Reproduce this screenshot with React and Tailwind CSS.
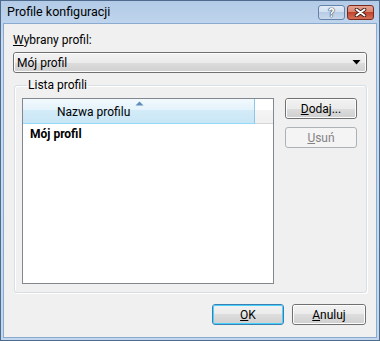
import React from 'react';

const font = { fontFamily: 'Roboto, "Noto Sans", sans-serif' };

function WinButton({ children, disabled, primary, className = '' }) {
  if (disabled) {
    return (
      <div className={`h-[21px] rounded-[3px] border border-[#adb2b5] bg-[#f4f4f4] flex items-center justify-center text-[#838383] ${className}`}>
        {children}
      </div>
    );
  }
  return (
    <div
      className={`h-[21px] rounded-[3px] border ${primary ? 'border-[#3c7fb1]' : 'border-[#707070]'} flex items-center justify-center text-black bg-[linear-gradient(#f2f2f2_0%,#ebebeb_50%,#dddddd_50%,#cfcfcf_100%)] ${className}`}
    >
      <div className={`w-full h-full rounded-[2px] border ${primary ? 'border-[#48d1fc]' : 'border-[#fcfcfc]'} flex items-center justify-center`}>
        {children}
      </div>
    </div>
  );
}

export default function App() {
  return (
    <div style={font} className="w-[380px] h-[341px] flex flex-col bg-[linear-gradient(#b3cbe7,#c8dbf1_40px,#c2d7ee)] border border-[#4e6a8c] text-[12px] leading-[16px] text-black overflow-hidden">
      {/* title bar */}
      <div className="h-[22px] flex items-start pl-[6px] pr-[5px]">
        <span className="text-[12.5px] mt-[3px] text-black">Profile konfiguracji</span>
        <div className="ml-auto flex gap-[2px] mt-[4px]">
          <div className="w-[27px] h-[15px] rounded-[3px] border border-[#6583a8] bg-[linear-gradient(#e2ecf7_0%,#cfdeef_50%,#b6cbe6_50%,#c8daef_100%)] flex items-center justify-center">
            <span className="text-white font-bold text-[12px] leading-[12px] [text-shadow:0_0_1px_#2b3e57,0_0_1px_#2b3e57,0_0_1px_#2b3e57]">?</span>
          </div>
          <div className="w-[27px] h-[15px] rounded-[3px] border border-[#7a2a1c] bg-[linear-gradient(#e6a493_0%,#d8806b_50%,#c2452b_50%,#d4705a_100%)] flex items-center justify-center">
            <svg width="13" height="9" viewBox="0 0 13 9">
              <path d="M2.5 1.5 L10.5 7.5 M10.5 1.5 L2.5 7.5" stroke="#3b1a14" strokeWidth="3.6" strokeLinecap="round" />
              <path d="M2.5 1.5 L10.5 7.5 M10.5 1.5 L2.5 7.5" stroke="#ffffff" strokeWidth="2" strokeLinecap="round" />
            </svg>
          </div>
        </div>
      </div>

      {/* client area */}
      <div className="flex-1 mx-[2px] mb-[2px] border border-[#8aaad0] bg-[#f0f0f0] flex flex-col pt-[8px] pl-[9px] pr-[9px]">
        <div>
          <span className="underline">W</span>ybrany profil:
        </div>
        <div className="mt-[4px] h-[21px] rounded-[3px] border border-[#707070] bg-[linear-gradient(#f2f2f2_0%,#ebebeb_50%,#dddddd_50%,#cfcfcf_100%)]">
          <div className="h-full rounded-[2px] border border-[#fcfcfc] flex items-center pl-[2px] pr-[4px]">
            <span>Mój profil</span>
            <svg className="ml-auto" width="9" height="5" viewBox="0 0 9 5">
              <path d="M0.5 0 L8.5 0 L4.5 4.5 Z" fill="#000" />
            </svg>
          </div>
        </div>

        <fieldset className="mt-[4px] ml-[1px] border border-[#d5dfe5] rounded-[3px] pl-[7px] pr-[8px] pt-[5px] pb-[8px] flex gap-[11px] shadow-[inset_1px_1px_0_#fff,1px_1px_0_#fff]">
          <legend className="ml-[5px] px-[1px]">Lista profili</legend>
          <div className="w-[252px] h-[186px] border border-[#828790] bg-white flex flex-col">
            <div className="h-[25px] flex">
              <div className="relative w-[232px] h-full border-r border-r-[#88c8e9] border-b border-b-[#96d9f9] bg-[linear-gradient(#f2f9fd_0%,#e4f3fb_45%,#d4ecf8_45%,#c9e6f6_100%)] flex items-end pb-[3px] pl-[34px]">
                <span>Nazwa profilu</span>
                <svg className="absolute left-[112px] top-[2px]" width="9" height="5" viewBox="0 0 9 5">
                  <path d="M0.5 4.5 L4.5 0.5 L8.5 4.5 Z" fill="#5d8bbb" />
                </svg>
              </div>
              <div className="flex-1 h-full border-b border-b-[#d5d5d5] bg-[linear-gradient(#ffffff_0%,#ffffff_45%,#f5f5f5_45%,#f0f0f0_100%)]" />
            </div>
            <div className="pl-[7px] pt-[2px] font-bold">Mój profil</div>
          </div>
          <div className="flex flex-col gap-[8px]">
            <WinButton className="w-[72px]">
              <span><span className="underline">D</span>odaj...</span>
            </WinButton>
            <WinButton disabled className="w-[72px]">
              <span><span className="underline">U</span>suń</span>
            </WinButton>
          </div>
        </fieldset>

        <div className="mt-[11px] flex justify-end gap-[8px] pr-[1px]">
          <WinButton primary className="w-[72px]">
            <span><span className="underline">O</span>K</span>
          </WinButton>
          <WinButton className="w-[74px]">
            <span><span className="underline">A</span>nuluj</span>
          </WinButton>
        </div>
      </div>
    </div>
  );
}
